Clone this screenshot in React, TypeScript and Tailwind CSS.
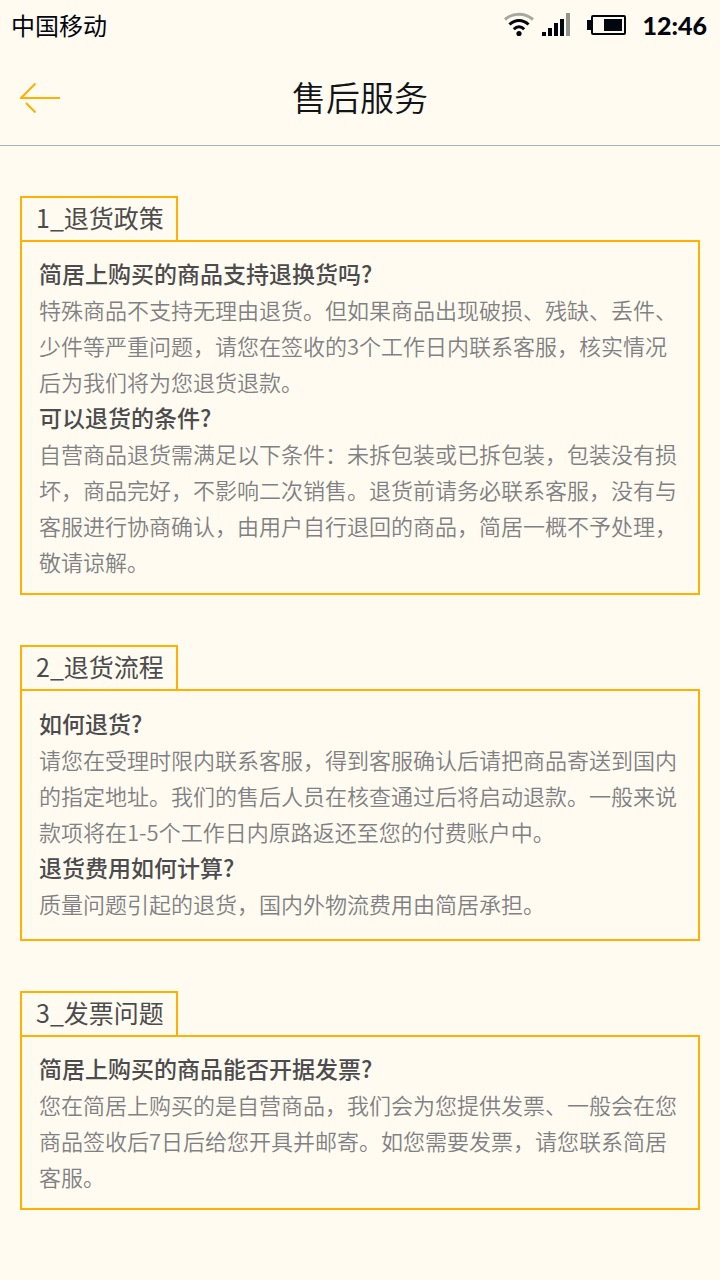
type Item = { question: string; answer: string };
type Section = { title: string; pad: string; items: Item[] };

const sections: Section[] = [
  {
    title: '1_退货政策',
    pad: 'pt-[13px] pb-[14px]',
    items: [
      {
        question: '简居上购买的商品支持退换货吗?',
        answer:
          '特殊商品不支持无理由退货。但如果商品出现破损、残缺、丢件、少件等严重问题，请您在签收的3个工作日内联系客服，核实情况后为我们将为您退货退款。',
      },
      {
        question: '可以退货的条件?',
        answer:
          '自营商品退货需满足以下条件：未拆包装或已拆包装，包装没有损坏，商品完好，不影响二次销售。退货前请务必联系客服，没有与客服进行协商确认，由用户自行退回的商品，简居一概不予处理，敬请谅解。',
      },
    ],
  },
  {
    title: '2_退货流程',
    pad: 'pt-[14px] pb-[18px]',
    items: [
      {
        question: '如何退货?',
        answer:
          '请您在受理时限内联系客服，得到客服确认后请把商品寄送到国内的指定地址。我们的售后人员在核查通过后将启动退款。一般来说款项将在1-5个工作日内原路返还至您的付费账户中。',
      },
      {
        question: '退货费用如何计算?',
        answer: '质量问题引起的退货，国内外物流费用由简居承担。',
      },
    ],
  },
  {
    title: '3_发票问题',
    pad: 'pt-[13px] pb-[14px]',
    items: [
      {
        question: '简居上购买的商品能否开据发票?',
        answer:
          '您在简居上购买的是自营商品，我们会为您提供发票、一般会在您商品签收后7日后给您开具并邮寄。如您需要发票，请您联系简居客服。',
      },
    ],
  },
];

function StatusBar() {
  return (
    <div className="flex h-[50px] items-center justify-between pr-[13px] pl-[11px] text-[#02060f]">
      <span className="text-[24px] leading-[48px]">中国移动</span>
      <div className="flex items-center">
        <svg className="h-[26px] w-[30px]" viewBox="0 0 30 26" fill="none" aria-hidden="true">
          <path d="M1 7.5C9 .5 21 .5 29 7.500" stroke="#a8a8a2" strokeWidth="3" />
          <path d="M5.500 12.500C11 7 19 7 24.500 12.500" stroke="currentColor" strokeWidth="3" />
          <path d="M9.800 17.300C13 14 17 14 20.200 17.300" stroke="currentColor" strokeWidth="3" />
          <circle cx="15" cy="21.500" r="2.600" fill="currentColor" />
        </svg>
        <svg className="ml-2 h-[24px] w-[29px]" viewBox="0 0 29 24" fill="currentColor" aria-hidden="true">
          <path d="M0 19h4v4H0zM6 15h4v8H6zM12 10h4v13h-4zM18 6h4v17h-4z" />
          <path d="M24 0h4v23h-4z" fill="#93958f" />
        </svg>
        <svg className="ml-4 h-[20px] w-[39px]" viewBox="0 0 39 20" fill="currentColor" aria-hidden="true">
          <path d="M0 5h4v10H0z" />
          <rect x="5" y="1" width="33" height="18" rx="1" fill="none" stroke="currentColor" strokeWidth="2" />
          <path d="M17 4h18v12H17z" />
        </svg>
        <span className="ml-4 font-['Lato',sans-serif] text-[25px] leading-[50px] font-black">12:46</span>
      </div>
    </div>
  );
}

export default function App() {
  return (
    <div className="min-h-screen bg-[#fffbf0] pb-[70px] font-['Noto_Sans_CJK_SC',sans-serif]">
      <StatusBar />
      <header className="grid h-24 grid-cols-[1fr_auto_1fr] items-center border-b border-[#abb4b8] px-5">
        <button type="button" aria-label="返回" className="w-10 text-[#ffb000]">
          <svg className="h-8 w-10" viewBox="0 0 40 32" fill="none" stroke="currentColor" strokeWidth="2" aria-hidden="true">
            <path d="M40 16H1L15.500 1.500M6 21l9.500 9.500" />
          </svg>
        </button>
        <h1 className="pb-[2px] text-[34px] leading-[48px] font-[350] text-[#111418]">售后服务</h1>
      </header>
      <main className="flex flex-col gap-[50px] px-5 pt-[50px]">
        {sections.map((s) => (
          <section key={s.title}>
            <h2 className="w-fit border-2 border-b-0 border-[#ffb000] pr-3 pb-1 pl-[14px] text-[25px] leading-[38px] text-[#4c4c4e]">
              {s.title}
            </h2>
            <div className={`border-2 border-[#ffb000] px-[17px] leading-9 ${s.pad}`}>
              {s.items.map((i) => (
                <div key={i.question}>
                  <h3 className="text-[23px] leading-9 font-medium text-[#4c4c4e]">{i.question}</h3>
                  <p className="text-[22px] leading-9 font-[350] text-[#808184]">{i.answer}</p>
                </div>
              ))}
            </div>
          </section>
        ))}
      </main>
    </div>
  );
}
